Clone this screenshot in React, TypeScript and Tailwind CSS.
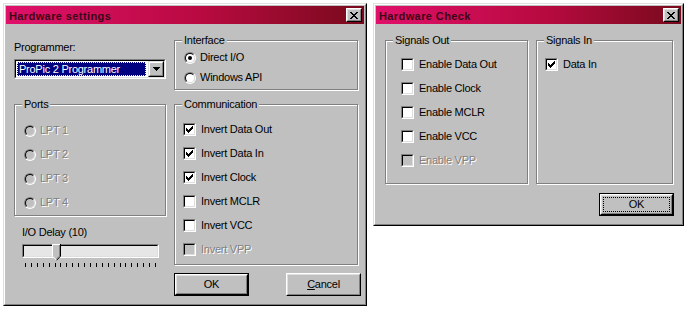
import React from "react";

const FONT = "font-['Liberation_Sans',Arial,sans-serif]";

function CloseBtn() {
  return (
    <div className="w-[16px] h-[14px] flex border border-t-white border-l-white border-b-black border-r-black bg-[#c0c0c0]">
      <div className="flex-1 flex items-center justify-center border border-t-[#dfdfdf] border-l-[#dfdfdf] border-b-[#808080] border-r-[#808080]">
        <svg width="8" height="7" viewBox="0 0 8 7" shapeRendering="crispEdges">
          <path
            d="M0 0h2v1H0zM6 0h2v1H6zM1 1h2v1H1zM5 1h2v1H5zM2 2h4v1H2zM3 3h2v1H3zM2 4h4v1H2zM1 5h2v1H1zM5 5h2v1H5zM0 6h2v1H0zM6 6h2v1H6z"
            fill="#000"
          />
        </svg>
      </div>
    </div>
  );
}

function TitleBar({ title }: { title: string }) {
  return (
    <div className="h-[18px] flex items-center justify-between pl-[3px] pr-[2px] bg-[linear-gradient(to_right,#e0106a,#b80a40_55%,#780a1c)]">
      <span className="mt-[2px] leading-[13px] text-[11px] font-bold tracking-[0.4px] text-[#3a0818]">{title}</span>
      <CloseBtn />
    </div>
  );
}

function Check({ checked, disabled, label }: { checked?: boolean; disabled?: boolean; label: string }) {
  return (
    <div className="flex items-center h-[13px]">
      <div className="w-[13px] h-[13px] shrink-0 flex border border-t-[#808080] border-l-[#808080] border-b-white border-r-white">
        <div
          className={`flex-1 flex items-center justify-center border border-t-black border-l-black border-b-[#dfdfdf] border-r-[#dfdfdf] ${
            disabled ? "bg-[#c0c0c0]" : "bg-white"
          }`}
        >
          {checked && (
            <svg width="7" height="7" viewBox="0 0 7 7" shapeRendering="crispEdges">
              <path d="M0 2h1v3H0zM1 3h1v3H1zM2 4h1v3H2zM3 3h1v3H3zM4 2h1v3H4zM5 1h1v3H5zM6 0h1v3H6z" fill="#000" />
            </svg>
          )}
        </div>
      </div>
      <span
        className={`ml-[5px] leading-[13px] whitespace-nowrap ${
          disabled ? "text-[#808080] [text-shadow:1px_1px_0_#fff]" : "text-black"
        }`}
      >
        {label}
      </span>
    </div>
  );
}

function Radio({ checked, disabled, label }: { checked?: boolean; disabled?: boolean; label: string }) {
  return (
    <div className="flex items-center h-[13px]">
      <div className="w-[12px] h-[12px] shrink-0 flex rounded-full border border-t-[#808080] border-l-[#808080] border-b-white border-r-white">
        <div
          className={`flex-1 flex items-center justify-center rounded-full border border-t-black border-l-black border-b-[#dfdfdf] border-r-[#dfdfdf] ${
            disabled ? "bg-[#c0c0c0]" : "bg-white"
          }`}
        >
          {checked && <div className="w-[4px] h-[4px] rounded-full bg-black" />}
        </div>
      </div>
      <span
        className={`ml-[4px] leading-[13px] whitespace-nowrap ${
          disabled ? "text-[#808080] [text-shadow:1px_1px_0_#fff]" : "text-black"
        }`}
      >
        {label}
      </span>
    </div>
  );
}

function Group({ label, className, children }: { label: string; className: string; children?: React.ReactNode }) {
  return (
    <div className={`relative border border-[#808080] shadow-[inset_1px_1px_0_#fff,1px_1px_0_#fff] ${className}`}>
      <span className="absolute -top-[7px] left-[7px] px-[2px] bg-[#c0c0c0] leading-[13px] whitespace-nowrap">{label}</span>
      {children}
    </div>
  );
}

function Btn({ children, isDefault, focus }: { children: React.ReactNode; isDefault?: boolean; focus?: boolean }) {
  return (
    <div className={`h-[23px] w-[75px] flex ${isDefault ? "border border-black" : ""}`}>
      <div className="flex-1 flex border border-t-white border-l-white border-b-black border-r-black">
        <div className="flex-1 flex p-[1px] border border-t-[#dfdfdf] border-l-[#dfdfdf] border-b-[#808080] border-r-[#808080]">
          <div
            className={`flex-1 flex items-center justify-center leading-[13px] border ${
              focus ? "border-dotted border-black" : "border-transparent"
            }`}
          >
            {children}
          </div>
        </div>
      </div>
    </div>
  );
}

function Dialog({ title, className, children }: { title: string; className: string; children: React.ReactNode }) {
  return (
    <div className={`flex border border-t-[#dfdfdf] border-l-[#dfdfdf] border-b-black border-r-black ${className}`}>
      <div className="flex-1 flex flex-col p-[1px] bg-[#c0c0c0] border border-t-white border-l-white border-b-[#808080] border-r-[#808080]">
        <TitleBar title={title} />
        {children}
      </div>
    </div>
  );
}

function Slider() {
  return (
    <div className="relative mt-[5px] ml-[8px] w-[137px]">
      <div className="h-[14px] flex border border-t-[#808080] border-l-[#808080] border-b-white border-r-white">
        <div className="flex-1 border border-t-black border-l-black border-b-[#dfdfdf] border-r-[#dfdfdf] bg-[#e6e6e6]" />
      </div>
      <svg className="absolute left-[30px] top-0" width="9" height="17" viewBox="0 0 9 17">
        <polygon points="0,0 9,0 9,12 4.5,16.5 0,12" fill="#c0c0c0" />
        <path d="M0.5 12.5 V0.5 H8" stroke="#fff" fill="none" />
        <path d="M8.5 0 V12.2 L4.5 16.4" stroke="#000" fill="none" />
        <path d="M7.5 1 V12 L4.5 15" stroke="#808080" fill="none" />
        <path d="M0.5 12.3 L4.3 16" stroke="#fff" fill="none" />
      </svg>
      <div className="mt-[5px] px-[3px] flex justify-between">
        {Array.from({ length: 23 }).map((_, i) => (
          <div key={i} className="w-[1px] h-[4px] bg-black" />
        ))}
      </div>
    </div>
  );
}

export default function App() {
  return (
    <div className={`w-[690px] h-[313px] bg-white flex items-start pt-[3px] pl-[3px] gap-[6px] text-[11px] tracking-[-0.25px] text-black ${FONT}`}>
      <Dialog title="Hardware settings" className="w-[364px] h-[303px]">
        <div className="flex pl-[8px] gap-[8px]">
          {/* left column */}
          <div className="w-[152px] flex flex-col">
            <div className="mt-[17px] leading-[13px]">Programmer:</div>
            <div className="mt-[5px] h-[20px] w-[152px] flex border border-t-[#808080] border-l-[#808080] border-b-white border-r-white">
              <div className="flex-1 flex border border-t-black border-l-black border-b-[#dfdfdf] border-r-[#dfdfdf] bg-white">
                <div className="flex-1 m-[1px] mr-[2px] flex items-center bg-[#000080] text-white border border-dotted border-[#ffffa0] pl-[1px] leading-[13px] whitespace-nowrap">
                  ProPic 2 Programmer
                </div>
                <div className="w-[16px] flex border border-t-[#dfdfdf] border-l-[#dfdfdf] border-b-black border-r-black bg-[#c0c0c0]">
                  <div className="flex-1 flex items-center justify-center border border-t-white border-l-white border-b-[#808080] border-r-[#808080]">
                    <svg width="7" height="4" viewBox="0 0 7 4" shapeRendering="crispEdges">
                      <path d="M0 0h7v1H0zM1 1h5v1H1zM2 2h3v1H2zM3 3h1v1H3z" fill="#000" />
                    </svg>
                  </div>
                </div>
              </div>
            </div>
            <Group label="Ports" className="mt-[25px] h-[112px] w-[152px] flex flex-col pt-[19px] pl-[9px] gap-[11px]">
              <Radio disabled label="LPT 1" />
              <Radio disabled label="LPT 2" />
              <Radio disabled label="LPT 3" />
              <Radio disabled label="LPT 4" />
            </Group>
            <div className="mt-[10px] ml-[8px] leading-[13px]">I/O Delay (10)</div>
            <Slider />
          </div>
          {/* right column */}
          <div className="w-[187px] flex flex-col">
            <Group label="Interface" className="mt-[16px] h-[50px] w-[184px] flex flex-col pt-[10px] pl-[9px] gap-[7px]">
              <Radio checked label="Direct I/O" />
              <Radio label="Windows API" />
            </Group>
            <Group label="Communication" className="mt-[14px] h-[161px] w-[184px] flex flex-col pt-[18px] pl-[8px] gap-[11px]">
              <Check checked label="Invert Data Out" />
              <Check checked label="Invert Data In" />
              <Check checked label="Invert Clock" />
              <Check label="Invert MCLR" />
              <Check label="Invert VCC" />
              <Check disabled label="Invert VPP" />
            </Group>
            <div className="mt-[8px] flex justify-between">
              <Btn isDefault>OK</Btn>
              <Btn>
                <span>
                  <span className="underline">C</span>ancel
                </span>
              </Btn>
            </div>
          </div>
        </div>
      </Dialog>

      <Dialog title="Hardware Check" className="w-[311px] h-[223px]">
        <div className="flex flex-col pl-[9px] pr-[6px]">
          <div className="mt-[16px] flex gap-[8px]">
            <Group label="Signals Out" className="h-[144px] w-[143px] flex flex-col pt-[17px] pl-[15px] gap-[11px]">
              <Check label="Enable Data Out" />
              <Check label="Enable Clock" />
              <Check label="Enable MCLR" />
              <Check label="Enable VCC" />
              <Check disabled label="Enable VPP" />
            </Group>
            <Group label="Signals In" className="h-[144px] w-[137px] flex flex-col pt-[17px] pl-[8px]">
              <Check checked label="Data In" />
            </Group>
          </div>
          <div className="mt-[9px] flex justify-end pr-[1px]">
            <Btn isDefault focus>
              OK
            </Btn>
          </div>
        </div>
      </Dialog>
    </div>
  );
}
